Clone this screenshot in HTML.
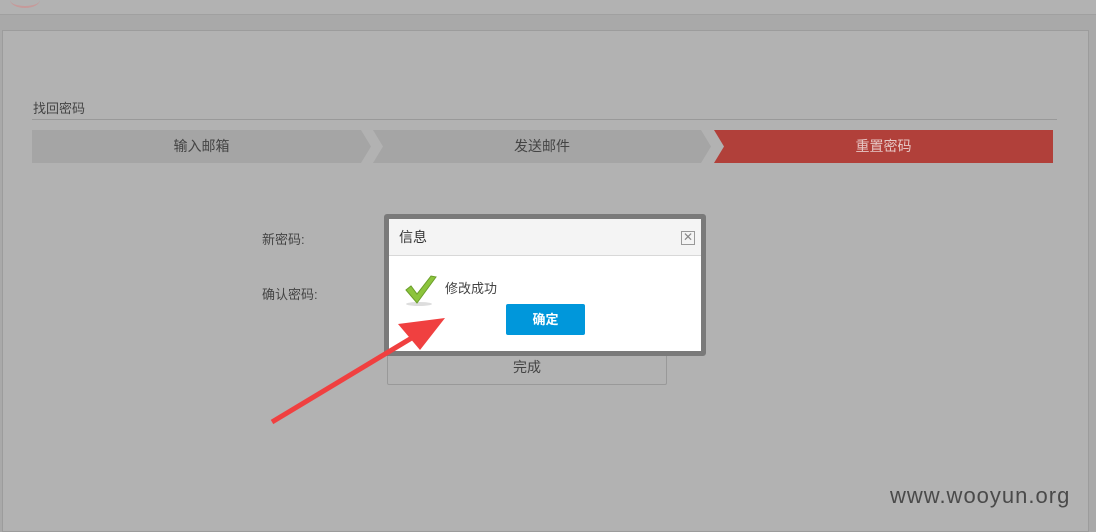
<!DOCTYPE html>
<html><head><meta charset="utf-8"><style>
body{margin:0;width:1096px;height:525px;overflow:hidden;background:#a9a9a9;font-family:"Liberation Sans","Noto Sans CJK SC",sans-serif;position:relative}
.a{position:absolute}
.step{position:absolute;top:130px;height:33px;line-height:33px;text-align:center;font-size:14px;color:#444}
</style></head><body>
<div class="a" style="left:0;top:0;width:1096px;height:14px;background:#b2b2b2;border-bottom:1px solid #a0a0a0"></div>
<div class="a" style="left:10px;top:-8px;width:30px;height:14px;border-radius:50%;border-bottom:2px solid #c69a9a"></div>
<div class="a" style="left:2px;top:30px;width:1085px;height:500px;background:#b2b2b2;border:1px solid #9c9c9c"></div>
<div class="a" style="left:33px;top:98px;font-size:13px;color:#444">找回密码</div>
<div class="a" style="left:32px;top:119px;width:1025px;height:1px;background:#999"></div>
<div class="step" style="left:32px;width:339px;background:#a5a5a5;clip-path:polygon(0 0,329px 0,339px 50%,329px 100%,0 100%)">输入邮箱</div>
<div class="step" style="left:373px;width:338px;background:#a5a5a5;clip-path:polygon(0 0,328px 0,338px 50%,328px 100%,0 100%,10px 50%)">发送邮件</div>
<div class="step" style="left:714px;width:339px;background:#b1403a;color:#e6c6c4;clip-path:polygon(0 0,100% 0,100% 100%,0 100%,10px 50%)">重置密码</div>
<div class="a" style="left:262px;top:229px;font-size:13px;color:#444">新密码:</div>
<div class="a" style="left:262px;top:284px;font-size:13px;color:#444">确认密码:</div>
<div class="a" style="left:388px;top:216px;width:278px;height:34px;border:1px solid #999;border-radius:2px"></div>
<div class="a" style="left:388px;top:271px;width:278px;height:34px;border:1px solid #999;border-radius:2px"></div>
<div class="a" style="left:387px;top:350px;width:278px;height:33px;border:1px solid #999;border-radius:2px;text-align:center;line-height:33px;font-size:14px;color:#444">完成</div>
<div class="a" style="left:384px;top:214px;width:312px;height:132px;border:5px solid #7a7a7a;border-radius:3px;background:#fff">
<div class="a" style="left:0;top:0;width:312px;height:36px;background:#f4f4f4;border-bottom:1px solid #d8d8d8;font-size:14px;line-height:36px;color:#333"><span style="padding-left:10px">信息</span></div>
<div class="a" style="left:292px;top:12px;width:12px;height:12px;border:1px solid #999;font-size:12px;line-height:11px;text-align:center;color:#888">✕</div>
<svg class="a" style="left:15px;top:54px" width="34" height="34"><ellipse cx="15" cy="31" rx="13" ry="2" fill="#ddd"/><path d="M2 17 L13 30 L32 4 L27 3 L13 21 L7 13 Z" fill="#8cc43c" stroke="#6a9e2a" stroke-width="1"/></svg>
<div class="a" style="left:56px;top:59px;font-size:13px;color:#444">修改成功</div>
<div class="a" style="left:117px;top:85px;width:79px;height:31px;background:#0097db;border-radius:2px;color:#fff;font-weight:bold;font-size:13px;text-align:center;line-height:31px">确定</div>
</div>
<svg class="a" style="left:0;top:0" width="1096" height="525"><line x1="272" y1="422" x2="415" y2="336" stroke="#f04040" stroke-width="5"/><polygon points="445,318 398,324 420,350" fill="#f04040"/></svg>
<div class="a" style="left:890px;top:483px;font-size:22px;color:#4a4a4a;letter-spacing:1px">www.wooyun.org</div>
</body></html>
